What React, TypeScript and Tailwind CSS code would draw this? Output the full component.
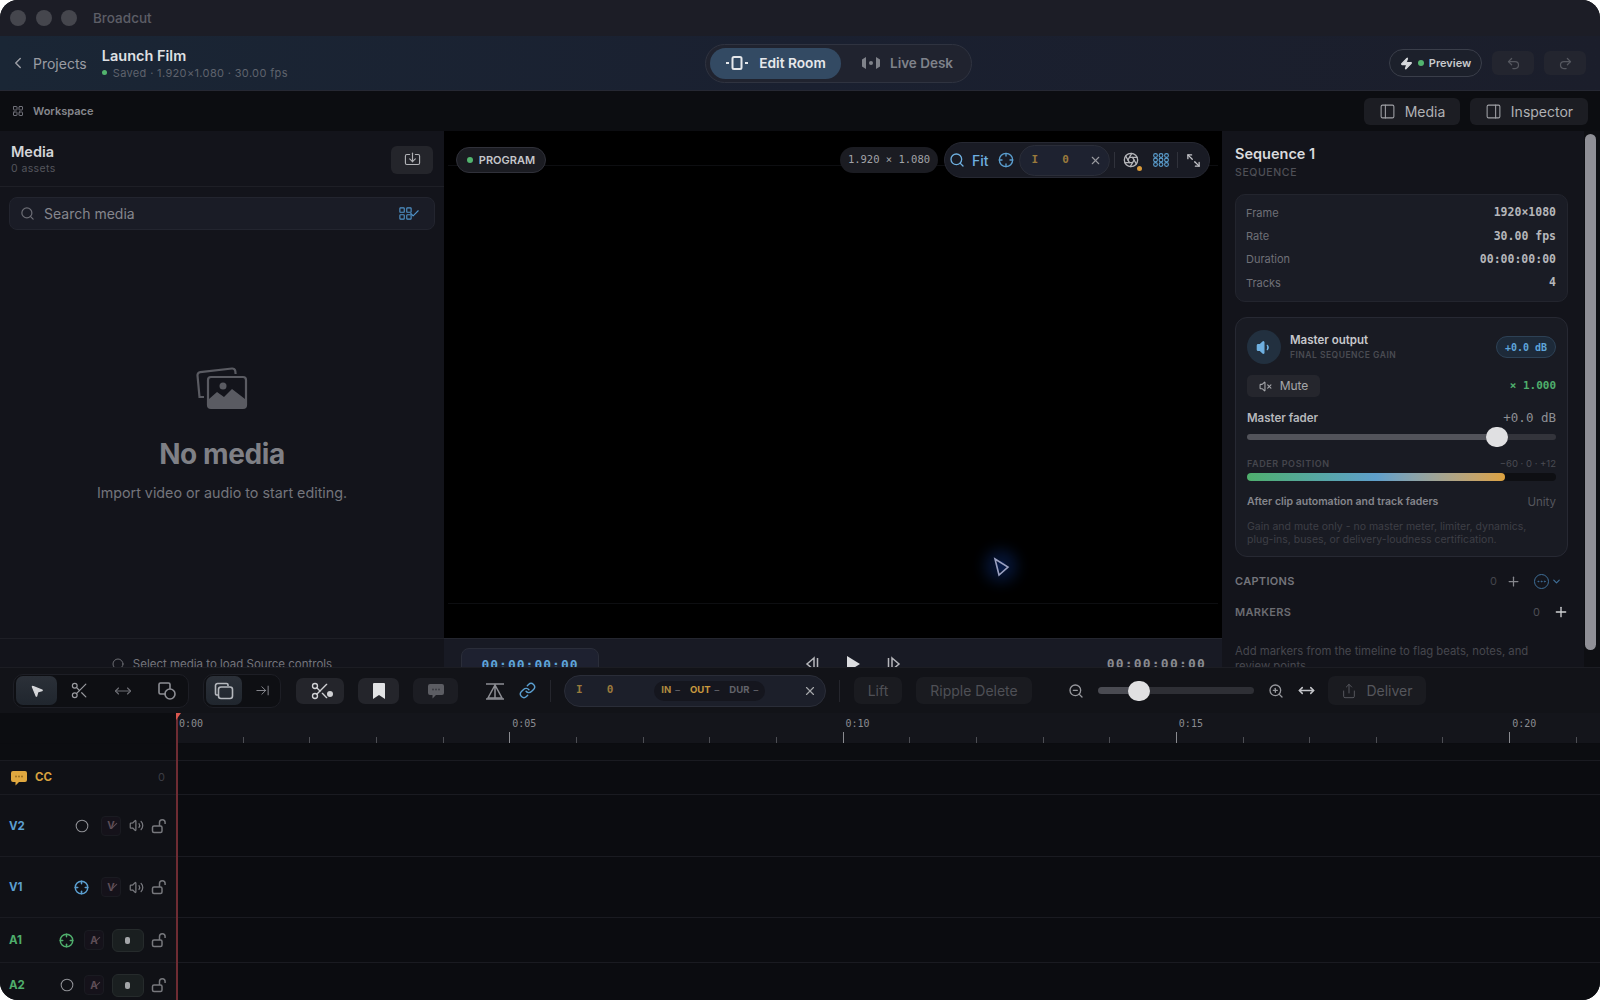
import {
  ArrowRightToLine,
  Check,
  ChevronDown,
  ChevronLeft,
  Aperture,
  Circle,
  Crosshair,
  Ellipsis,
  LayoutGrid,
  Link,
  Maximize2,
  MousePointer2,
  MoveHorizontal,
  PanelLeft,
  PanelRight,
  Plus,
  Redo2,
  Scissors,
  Search,
  Share,
  Undo2,
  Volume1,
  Volume2,
  VolumeX,
  X,
  Zap,
  ZoomIn,
  ZoomOut,
  Import,
} from "lucide-react";

const mono = "[font-family:'DejaVu_Sans_Mono',monospace]";

const sequenceRows = [
  { label: "Frame", value: "1920×1080" },
  { label: "Rate", value: "30.00 fps" },
  { label: "Duration", value: "00:00:00:00" },
  { label: "Tracks", value: "4" },
];

const seconds = Array.from({ length: 22 }, (_, i) => i);

function EditRoomIcon() {
  return (
    <svg width="24" height="16" viewBox="0 0 24 16" fill="none" stroke="currentColor" strokeWidth="2">
      <rect x="7.5" y="2" width="9" height="12" rx="1.5" />
      <path d="M1 8h3M20 8h3" />
    </svg>
  );
}

function LiveDeskIcon() {
  return (
    <svg width="20" height="14" viewBox="0 0 20 14" fill="currentColor">
      <path d="M1 3.5 5 1v12l-4-2.5zM19 3.5 15 1v12l4-2.5z" />
      <circle cx="10" cy="7" r="2" />
    </svg>
  );
}

function DotGrid() {
  return (
    <svg width="16" height="14" viewBox="0 0 16 14" fill="none" stroke="#5b9fd0" strokeWidth="1.1">
      {[2.5, 8, 13.5].map((x) =>
        [2.5, 7, 11.5].map((y) => <circle key={`${x}-${y}`} cx={x} cy={y} r="1.9" />)
      )}
    </svg>
  );
}

function EmptyMediaIcon() {
  return (
    <svg width="52" height="44" viewBox="0 0 52 44" fill="none" stroke="#5a5b62" strokeWidth="2.2">
      <path d="M8 31 3.5 31 1.5 9.5a3 3 0 0 1 2.7-3.3L36 2.5a3 3 0 0 1 3.3 2.7L39.6 8" />
      <rect x="12" y="11" width="38" height="31" rx="3" />
      <circle cx="27" cy="20" r="3.5" fill="#5a5b62" stroke="none" />
      <path d="M13 41V33l8-7 7 5 8-8 13 10v8z" fill="#5a5b62" stroke="none" />
    </svg>
  );
}

function ShapeToolIcon() {
  return (
    <svg width="20" height="20" viewBox="0 0 20 20" fill="none" stroke="#8d8e94" strokeWidth="1.6">
      <path d="M9 13H3.5A1.5 1.5 0 0 1 2 11.5v-8A1.5 1.5 0 0 1 3.5 2h8A1.5 1.5 0 0 1 13 3.5V8" />
      <circle cx="13" cy="13" r="5" />
    </svg>
  );
}

function OverlapIcon() {
  return (
    <svg width="20" height="20" viewBox="0 0 20 20" fill="none" stroke="#b5b8bd" strokeWidth="1.6">
      <path d="M4 14H3a1.5 1.5 0 0 1-1.5-1.5v-8A2 2 0 0 1 3.5 2.5h9A1.5 1.5 0 0 1 14 4v1" />
      <rect x="4.5" y="6" width="14" height="11.5" rx="2.5" />
    </svg>
  );
}

function LiftIcon() {
  return (
    <svg width="20" height="20" viewBox="0 0 20 20" fill="none" stroke="#8d8e94" strokeWidth="1.5">
      <path d="M1 3h18M10 4 3 17h14zM10 4v13" />
      <path d="M1 18h18" />
    </svg>
  );
}

function TrackLockIcon() {
  return (
    <svg width="16" height="16" viewBox="0 0 16 16" fill="none" stroke="#77787d" strokeWidth="1.5">
      <rect x="1.5" y="8" width="9.5" height="6.5" rx="1.5" />
      <path d="M8.5 8V4.5a2.8 2.8 0 0 1 5.6 0V6" />
    </svg>
  );
}

function StepIcon({ flip }: { flip?: boolean }) {
  return (
    <svg
      width="16"
      height="16"
      viewBox="0 0 16 16"
      fill="none"
      stroke="#b6b7bb"
      strokeWidth="1.5"
      className={flip ? "-scale-x-100" : ""}
    >
      <path d="M10 2 3 8l7 6zM13.5 2v12" />
    </svg>
  );
}

function CaptionBubble({ color, dot }: { color: string; dot: string }) {
  return (
    <svg width="18" height="16" viewBox="0 0 18 16">
      <path d="M3 1h12a2 2 0 0 1 2 2v7a2 2 0 0 1-2 2H9l-3.5 3.5V12H3a2 2 0 0 1-2-2V3a2 2 0 0 1 2-2z" fill={color} />
      <circle cx="6" cy="6.5" r="1" fill={dot} />
      <circle cx="9" cy="6.5" r="1" fill={dot} />
      <circle cx="12" cy="6.5" r="1" fill={dot} />
    </svg>
  );
}

function Ruler() {
  return (
    <div className="flex h-[31px] border-b border-[#0b0c10] bg-[#14151b] overflow-hidden">
      <div className="w-[176px] shrink-0 bg-[#0c0d11]" />
      {seconds.map((s) => (
        <div key={s} className="flex w-[66.67px] shrink-0 flex-col justify-between">
          <span className={`h-[18px] pl-[3px] pt-[4px] text-[10px] leading-[14px] text-[#8b8c91] ${mono}`}>
            {s % 5 === 0 ? `0:${String(s).padStart(2, "0")}` : ""}
          </span>
          {s % 5 === 0 ? (
            <div className={`w-px h-[11px] ${s === 0 ? "bg-transparent" : "bg-[#8a8b90]"}`} />
          ) : (
            <div className="w-px h-[6px] bg-[#4d4e54]" />
          )}
        </div>
      ))}
    </div>
  );
}

function TrackRow({
  name,
  color,
  height,
  target,
  letter,
  audio,
}: {
  name: string;
  color: string;
  height: string;
  target: "off" | "blue" | "green";
  letter: string;
  audio?: boolean;
}) {
  return (
    <div className={`flex ${height} border-t border-[#1a1b21]`}>
      <div className="flex w-[176px] shrink-0 items-center bg-[#101116] pl-[9px] pr-[9px]">
        <span className={`mt-[2px] text-[11.5px] font-bold ${color}`}>{name}</span>
        <div className="ml-auto flex items-center gap-[7.5px]">
          <span className={audio ? "mr-[3px] flex" : "mr-[5px] flex"}>
            {target === "off" && <Circle size={14} strokeWidth={1.8} className="text-[#8f9095]" />}
            {target === "blue" && <Crosshair size={15} strokeWidth={2.4} className="text-[#5b9fd0]" />}
            {target === "green" && <Crosshair size={15} strokeWidth={2.4} className="text-[#4fae6c]" />}
          </span>
          <span className="relative flex h-[20px] w-[20px] items-center justify-center overflow-hidden rounded-[4px] border border-[#1a1b21] bg-[#15121a] text-[10px] font-bold text-[#5e4d56]">
            {letter}
            <span className="absolute left-[9px] top-[8px] h-px w-[7px] -rotate-45 bg-[#5e4d56]" />
          </span>
          {audio ? (
            <span className="flex h-[23px] w-[32px] items-center justify-center rounded-[6px] border border-[#262b2c] bg-[#1a1f20]">
              <span className="h-[7px] w-[5px] rounded-[2px] bg-[#a3a5a8]" />
            </span>
          ) : (
            <Volume2 size={15} className="text-[#77787d]" />
          )}
          <TrackLockIcon />
        </div>
      </div>
      <div className="flex-1 bg-[#0b0c10]" />
    </div>
  );
}

export default function App() {
  return (
    <div className="h-screen w-full overflow-hidden bg-white [font-family:Inter,sans-serif]">
      <div className="relative flex h-[1000px] flex-col overflow-hidden rounded-[18px] bg-[#0b0c10]">
        {/* title bar */}
        <div className="flex h-[36px] shrink-0 items-center bg-[#1c1d26] pl-[10px]">
          <span className="h-[16px] w-[16px] rounded-full bg-[#45464d]" />
          <span className="ml-[9.5px] h-[16px] w-[16px] rounded-full bg-[#45464d]" />
          <span className="ml-[9.5px] h-[16px] w-[16px] rounded-full bg-[#45464d]" />
          <span className="ml-[16px] text-[13.5px] font-medium text-[#5d5e66]">Broadcut</span>
        </div>

        {/* header */}
        <div className="flex h-[55px] shrink-0 items-center border-b border-[#262833] bg-gradient-to-r from-[#1a2635] via-[#1a2030] to-[#1b1e2b]">
          <div className="flex w-[705px] shrink-0 items-center pl-[9px]">
            <ChevronLeft size={18} className="text-[#9a9ca3]" />
            <span className="ml-[6px] text-[14px] text-[#9a9ca3]">Projects</span>
            <div className="ml-[15px] flex flex-col">
              <span className="text-[14.5px] leading-[18px] font-semibold text-[#dfe0e3]">Launch Film</span>
              <span className="mt-[1px] flex items-center gap-[6px] text-[11px] leading-[14px] tracking-[0.35px] text-[#5f636d]">
                <span className="h-[5px] w-[5px] rounded-full bg-[#52b46e]" />
                Saved · 1.920×1.080 · 30.00 fps
              </span>
            </div>
          </div>
          <div className="flex h-[39px] w-[267px] shrink-0 items-center gap-[5px] rounded-full border border-[#2f3340] bg-[#20232f] px-[4px]">
            <div className="flex h-[31px] w-[131px] items-center justify-center gap-[10px] rounded-full bg-[#334a63] text-[#e6e8eb]">
              <EditRoomIcon />
              <span className="text-[13.7px] font-semibold">Edit Room</span>
            </div>
            <div className="flex items-center gap-[9px] pl-[15px] text-[#7f828a]">
              <LiveDeskIcon />
              <span className="text-[13.5px] font-semibold">Live Desk</span>
            </div>
          </div>
          <div className="flex flex-1 items-center justify-end gap-[10px] pr-[14px]">
            <div className="flex h-[28px] w-[93px] items-center justify-center gap-[5px] rounded-full border border-[#3a3e4a] bg-[#1c202b]">
              <Zap size={13} className="fill-[#d8dadd] text-[#d8dadd]" />
              <span className="h-[6px] w-[6px] rounded-full bg-[#52b46e]" />
              <span className="text-[11px] font-semibold text-[#c8cacd]">Preview</span>
            </div>
            <div className="flex h-[24px] w-[42px] items-center justify-center rounded-[6px] bg-[#23252f]">
              <Undo2 size={15} className="text-[#55575f]" />
            </div>
            <div className="flex h-[24px] w-[42px] items-center justify-center rounded-[6px] bg-[#23252f]">
              <Redo2 size={15} className="text-[#55575f]" />
            </div>
          </div>
        </div>

        {/* workspace bar */}
        <div className="flex h-[40px] shrink-0 items-center justify-between bg-[#0c0d11] pl-[12px] pr-[12px]">
          <div className="flex items-center gap-[9px]">
            <LayoutGrid size={12} className="text-[#70717a]" />
            <span className="text-[11px] font-semibold text-[#86878d]">Workspace</span>
          </div>
          <div className="flex items-center gap-[10px]">
            <div className="flex h-[27px] w-[96px] items-center justify-center gap-[9px] rounded-[6px] bg-[#1c1d23]">
              <PanelLeft size={17} strokeWidth={1.5} className="text-[#a0a1a6]" />
              <span className="text-[14px] text-[#b0b1b5]">Media</span>
            </div>
            <div className="flex h-[27px] w-[118px] items-center justify-center gap-[9px] rounded-[6px] bg-[#1c1d23]">
              <PanelRight size={17} strokeWidth={1.5} className="text-[#a0a1a6]" />
              <span className="text-[14px] text-[#b0b1b5]">Inspector</span>
            </div>
          </div>
        </div>

        {/* main panels */}
        <div className="flex h-[536px] shrink-0 overflow-hidden">
          {/* media */}
          <div className="flex w-[444px] shrink-0 flex-col bg-[#13141b]">
            <div className="flex h-[56px] shrink-0 items-center justify-between border-b border-[#1e1f26] pl-[11px] pr-[11px] pt-[2px]">
              <div className="flex flex-col">
                <span className="text-[14.5px] leading-[18px] font-semibold text-[#d4d5d8]">Media</span>
                <span className="text-[10.5px] leading-[15px] tracking-[0.4px] text-[#55565d]">0 assets</span>
              </div>
              <div className="flex h-[28px] w-[42px] items-center justify-center rounded-[6px] bg-[#24252b]">
                <Import size={17} strokeWidth={1.6} className="text-[#b2b3b7]" />
              </div>
            </div>
            <div className="mx-[9px] mt-[10px] flex h-[33px] shrink-0 items-center rounded-[8px] border border-[#23252f] bg-[#1a1c26] pl-[10px] pr-[14px]">
              <Search size={15} className="text-[#6b6c74]" />
              <span className="ml-[9px] text-[14px] text-[#85868d]">Search media</span>
              <span className="ml-auto flex items-center text-[#4f93c9]">
                <LayoutGrid size={15} strokeWidth={1.8} />
                <Check size={11} strokeWidth={2.4} className="-ml-[4px]" />
              </span>
            </div>
            <div className="flex h-[408px] shrink-0 flex-col items-center pt-[136px]">
              <EmptyMediaIcon />
              <span className="mt-[27px] text-[28px] leading-[34px] font-bold tracking-[-0.4px] text-[#7f8086]">No media</span>
              <span className="mt-[12px] text-[14.3px] leading-[20px] text-[#74757c]">Import video or audio to start editing.</span>
            </div>
            <div className="flex h-[50px] shrink-0 items-start justify-center gap-[9px] border-t border-[#1e1f26] pt-[16px]">
              <Circle size={12} className="mt-[3px] text-[#6b6c72]" />
              <span className="text-[11.5px] leading-[18px] text-[#74757b]">Select media to load Source controls</span>
            </div>
          </div>

          {/* program viewer */}
          <div className="flex w-[778px] shrink-0 flex-col">
            <div className="relative h-[507px] shrink-0 bg-black">
              {/* frame outline */}
              <div className="absolute inset-x-[4px] top-[34px] bottom-[34px] border-y border-[#0d0e11]" />
              <div className="relative flex h-[54px] items-center justify-between pl-[12px] pr-[12px] pt-[4px]">
                <div className="flex h-[26px] w-[90px] items-center justify-center gap-[6px] rounded-full border border-[#30313a] bg-[#1b1c22]">
                  <span className="h-[6px] w-[6px] rounded-full bg-[#52b46e]" />
                  <span className="text-[11px] font-semibold text-[#c5c6ca]">PROGRAM</span>
                </div>
                <div className="flex items-center gap-[6px]">
                  <div className={`flex h-[26px] w-[98px] items-center justify-center rounded-full bg-[#1b1c22] text-[10.5px] text-[#a2a3a8] ${mono}`}>
                    1.920 × 1.080
                  </div>
                  <div className="flex h-[36px] w-[266px] items-center rounded-full border border-[#262832] bg-[#191b24] pl-[4px]">
                    <Search size={16} className="text-[#6fb0e0]" />
                    <span className="ml-[7px] text-[14px] font-medium text-[#6fb0e0]">Fit</span>
                    <Crosshair size={16} className="ml-[9px] text-[#5b9fd0]" />
                    <div className="ml-[5px] flex h-[31px] w-[91px] items-center rounded-full border border-[#2a2d38] bg-[#1e2230] pl-[12px] pr-[7px]">
                      <span className={`text-[11px] font-bold text-[#9a7a3c] ${mono}`}>I</span>
                      <span className={`ml-[24px] text-[11px] font-bold text-[#9a7a3c] ${mono}`}>0</span>
                      <X size={13} className="ml-auto text-[#9a9ba0]" />
                    </div>
                    <div className="ml-[4px] h-[16px] w-px bg-[#30323b]" />
                    <span className="relative ml-[8px] flex">
                      <Aperture size={16} className="text-[#b4b5b9]" />
                      <span className="absolute -right-[3px] -bottom-[3px] h-[5px] w-[5px] rounded-full bg-[#d99a3a]" />
                    </span>
                    <span className="ml-[14px] flex">
                      <DotGrid />
                    </span>
                    <div className="ml-[8px] h-[16px] w-px bg-[#30323b]" />
                    <Maximize2 size={15} className="ml-[8px] -scale-x-100 text-[#c5c6ca]" />
                  </div>
                </div>
              </div>
              {/* pointer */}
              <div className="absolute left-[552px] top-[430px] h-[10px] w-[10px] rounded-full bg-[#071a45] shadow-[0_0_14px_11px_#061433]" />
              <svg width="20" height="20" viewBox="0 0 20 20" fill="none" stroke="#9aa0c0" strokeWidth="1.6" className="absolute left-[547px] top-[426px]">
                <path d="M4 2 17 10 8 18z" />
              </svg>
            </div>
            <div className="flex h-[50px] shrink-0 items-start border-t border-[#24262f] bg-[#181a24] pl-[17px] pr-[16px] pt-[9px]">
              <div className="flex h-[40px] w-[138px] justify-center rounded-t-[8px] border border-[#2a2d39] bg-[#1e2130] pt-[6px]">
                <span className={`text-[13px] font-bold tracking-[1px] text-[#5ea5da] ${mono}`}>00:00:00:00</span>
              </div>
              <div className="ml-[205px] flex items-center gap-[25px] pt-[7px]">
                <StepIcon />
                <svg width="16" height="18" viewBox="0 0 16 18" fill="#dcdde0">
                  <path d="M2 1 15 9 2 17z" />
                </svg>
                <StepIcon flip />
              </div>
              <span className={`ml-auto pt-[6px] text-[13px] font-bold tracking-[1.2px] text-[#8a8b90] ${mono}`}>00:00:00:00</span>
            </div>
          </div>

          {/* inspector */}
          <div className="flex w-[378px] shrink-0 bg-[#13141b]">
            <div className="w-[362px] shrink-0 pl-[13px] pr-[16px]">
              <div className="pt-[14px] text-[14.5px] leading-[18px] font-semibold text-[#d9dadd]">Sequence 1</div>
              <div className="mt-[2px] text-[10.5px] leading-[16px] font-medium tracking-[0.6px] text-[#4f5057]">SEQUENCE</div>
              <div className="mt-[13px] flex h-[108px] flex-col justify-center gap-[7.4px] rounded-[10px] border border-[#23252e] bg-[#1a1c25] pl-[10px] pr-[11px]">
                {sequenceRows.map((row) => (
                  <div key={row.label} className="flex h-[16px] items-center justify-between">
                    <span className="text-[11px] text-[#6f7077]">{row.label}</span>
                    <span className={`text-[11.5px] font-bold text-[#b5b6ba] ${mono}`}>{row.value}</span>
                  </div>
                ))}
              </div>
              <div className="mt-[15px] h-[240px] rounded-[12px] border border-[#272933] bg-[#191b23] pl-[11px] pr-[11px] pt-[12px]">
                <div className="flex items-center">
                  <div className="flex h-[34px] w-[34px] items-center justify-center rounded-full bg-[#22303f]">
                    <Volume1 size={17} className="fill-[#6fb0e0] text-[#6fb0e0]" />
                  </div>
                  <div className="ml-[9px] flex flex-col">
                    <span className="text-[11.5px] leading-[15px] font-semibold text-[#c6c7cb]">Master output</span>
                    <span className="mt-[1px] text-[8.5px] leading-[12px] font-semibold tracking-[0.5px] text-[#4a4b52]">FINAL SEQUENCE GAIN</span>
                  </div>
                  <span className={`ml-auto flex h-[22px] w-[60px] items-center justify-center rounded-full border border-[#2d4155] bg-[#1d2a39] text-[10px] font-bold text-[#5ea5da] ${mono}`}>
                    +0.0 dB
                  </span>
                </div>
                <div className="mt-[11px] flex items-center justify-between">
                  <div className="flex h-[22px] w-[73px] items-center justify-center gap-[8px] rounded-[5px] bg-[#25262d]">
                    <VolumeX size={13} className="text-[#a5a6aa]" />
                    <span className="text-[12px] text-[#a5a6aa]">Mute</span>
                  </div>
                  <span className={`text-[11px] font-bold text-[#4fae6c] ${mono}`}>× 1.000</span>
                </div>
                <div className="mt-[13px] flex items-center justify-between">
                  <span className="text-[11.5px] font-semibold leading-[16px] text-[#b6b7bb]">Master fader</span>
                  <span className={`text-[12.5px] leading-[16px] text-[#8e8f94] ${mono}`}>+0.0 dB</span>
                </div>
                <div className="mt-0 flex h-[22px] items-center">
                  <div className="h-[6px] w-[240px] rounded-l-full bg-[#52535a]" />
                  <div className="z-10 -ml-[1px] h-[20px] w-[22px] shrink-0 rounded-full bg-[#e0e0e2]" />
                  <div className="-ml-[1px] h-[6px] flex-1 rounded-r-full bg-[#33343b]" />
                </div>
                <div className="mt-[10px] flex items-center justify-between">
                  <span className="text-[9px] leading-[12px] font-semibold tracking-[0.6px] text-[#45464d]">FADER POSITION</span>
                  <span className="text-[9.5px] leading-[12px] text-[#4a4b52]">−60 · 0 · +12</span>
                </div>
                <div className="mt-[3px] h-[8px] rounded-full bg-[#0e0f13]">
                  <div className="h-[8px] w-[258px] rounded-full bg-gradient-to-r from-[#4fae6c] via-[#5f9fcb] to-[#dda23e]" />
                </div>
                <div className="mt-[14px] flex items-center justify-between">
                  <span className="text-[10.5px] leading-[14px] font-semibold text-[#85868c]">After clip automation and track faders</span>
                  <span className="text-[11.5px] leading-[14px] text-[#55565d]">Unity</span>
                </div>
                <p className="mt-[12px] text-[10.5px] leading-[12.5px] text-[#3e3f46]">
                  Gain and mute only - no master meter, limiter, dynamics,
                  <br />
                  plug-ins, buses, or delivery-loudness certification.
                </p>
              </div>
              <div className="mt-[15px] mr-[6px] flex h-[18px] items-center">
                <span className="text-[11px] font-semibold tracking-[0.3px] text-[#74757b]">CAPTIONS</span>
                <span className="ml-auto text-[11px] text-[#44454c]">0</span>
                <Plus size={15} className="ml-[9px] text-[#85868c]" />
                <span className="ml-[13px] flex items-center text-[#3f6f98]">
                  <Ellipsis size={15} className="rounded-full border border-[#3f6f98] p-[1px]" />
                  <ChevronDown size={11} strokeWidth={2.6} className="ml-[2px]" />
                </span>
              </div>
              <div className="mt-[13px] flex h-[18px] items-center">
                <span className="text-[11px] font-semibold tracking-[0.3px] text-[#6b6c72]">MARKERS</span>
                <span className="ml-auto text-[11px] text-[#4c4d54]">0</span>
                <Plus size={16} className="ml-[13px] mr-[-1px] text-[#d0d1d4]" />
              </div>
              <p className="mt-[23px] w-[310px] text-[11.3px] leading-[15px] text-[#46474e]">
                Add markers from the timeline to flag beats, notes, and review points
              </p>
            </div>
            <div className="flex-1 bg-[#0e0f13] pt-[3px] pl-[1px]">
              <div className="h-[516px] w-[11px] rounded-full bg-[#8f8f96]" />
            </div>
          </div>
        </div>

        {/* toolbar */}
        <div className="flex h-[46px] shrink-0 items-center border-t border-[#1c1d23] bg-[#121318] pl-[13px]">
          <div className="flex h-[34px] w-[176px] items-center rounded-[10px] border border-[#1d1e25] bg-[#0e0f13] pl-[2px]">
            <div className="flex h-[29px] w-[41px] items-center justify-center rounded-[7px] bg-gradient-to-b from-[#2b3038] to-[#20262e]">
              <MousePointer2 size={14} className="fill-[#d5d6d9] text-[#d5d6d9]" />
            </div>
            <Scissors size={19} strokeWidth={1.5} className="ml-[13px] text-[#9a9ba0]" />
            <MoveHorizontal size={18} strokeWidth={1.5} className="ml-[25px] text-[#6f7076]" />
            <span className="ml-[25px] flex">
              <ShapeToolIcon />
            </span>
          </div>
          <div className="ml-[14px] flex h-[34px] w-[78px] items-center rounded-[10px] border border-[#1d1e25] bg-[#0e0f13] pl-[2px]">
            <div className="flex h-[29px] w-[36px] items-center justify-center rounded-[7px] bg-gradient-to-b from-[#2b3038] to-[#20262e]">
              <OverlapIcon />
            </div>
            <ArrowRightToLine size={15} strokeWidth={1.5} className="ml-[13px] text-[#8d8e94]" />
          </div>
          <div className="relative ml-[15px] flex h-[26px] w-[48px] items-center justify-center rounded-[7px] bg-[#24252b]">
            <Scissors size={20} strokeWidth={1.6} className="text-[#d0d1d4]" />
            <span className="absolute right-[11px] top-[13px] h-[6px] w-[6px] rounded-full bg-[#d0d1d4]" />
          </div>
          <div className="ml-[14px] flex h-[26px] w-[41px] items-center justify-center rounded-[7px] bg-[#24252b]">
            <svg width="12" height="16" viewBox="0 0 12 16" fill="#e2e3e5">
              <path d="M0 1a1 1 0 0 1 1-1h10a1 1 0 0 1 1 1v15l-6-4-6 4z" />
            </svg>
          </div>
          <div className="ml-[14px] flex h-[26px] w-[45px] items-center justify-center rounded-[7px] bg-[#1c1d23]">
            <CaptionBubble color="#5c5d63" dot="#3b3c42" />
          </div>
          <span className="ml-[27px] flex">
            <LiftIcon />
          </span>
          <Link size={17} className="ml-[14px] text-[#5b9fd0]" />
          <div className="ml-[14px] h-[22px] w-px bg-[#25262d]" />
          <div className="ml-[13px] flex h-[32px] w-[262px] items-center rounded-full border border-[#2a2d38] bg-[#1c1f2a] pl-[11px] pr-[8px]">
            <span className={`text-[11px] font-bold text-[#9a7a3c] ${mono}`}>I</span>
            <span className={`ml-[24px] text-[11px] font-bold text-[#9a7a3c] ${mono}`}>0</span>
            <div className="ml-[41px] flex h-[20px] w-[111px] items-center justify-center gap-[4px] rounded-full bg-[#15161e] text-[9.5px] font-bold">
              <span className="text-[#b08a3e]">IN</span>
              <span className="font-normal text-[#6a6b72]">–</span>
              <span className="ml-[6px] text-[#c8993f]">OUT</span>
              <span className="font-normal text-[#6a6b72]">–</span>
              <span className="ml-[6px] text-[#62636a]">DUR</span>
              <span className="font-normal text-[#6a6b72]">–</span>
            </div>
            <X size={14} className="ml-auto text-[#a5a6aa]" />
          </div>
          <div className="ml-[13px] h-[22px] w-px bg-[#25262d]" />
          <div className="ml-[14px] flex h-[27px] w-[48px] items-center justify-center rounded-[7px] bg-[#1a1b20] text-[14px] text-[#4f5056]">Lift</div>
          <div className="ml-[14px] flex h-[27px] w-[116px] items-center justify-center rounded-[7px] bg-[#1a1b20] text-[14px] text-[#4f5056]">Ripple Delete</div>
          <ZoomOut size={16} className="ml-[36px] text-[#96979c]" />
          <div className="ml-[14px] flex h-[22px] w-[156px] items-center">
            <div className="h-[7px] w-[31px] rounded-l-full bg-[#4a4b52]" />
            <div className="z-10 -ml-[1px] h-[20px] w-[22px] shrink-0 rounded-full bg-[#e0e0e2]" />
            <div className="-ml-[1px] h-[7px] flex-1 rounded-r-full bg-[#2e2f35]" />
          </div>
          <ZoomIn size={16} className="ml-[14px] text-[#96979c]" />
          <MoveHorizontal size={17} strokeWidth={2.2} className="ml-[14px] text-[#c4c5c9]" />
          <div className="ml-[13px] flex h-[29px] w-[98px] items-center justify-center gap-[9px] rounded-[7px] bg-[#1a1b20]">
            <Share size={16} strokeWidth={1.5} className="text-[#55565c]" />
            <span className="text-[14px] text-[#55565c]">Deliver</span>
          </div>
        </div>

        {/* timeline */}
        <div className="relative flex-1 overflow-hidden">
          <Ruler />
          <div className="h-[16px] bg-[#0c0d11]" />
          <div className="flex h-[34px] border-t border-[#1a1b21]">
            <div className="flex w-[176px] shrink-0 items-center bg-[#101116] pl-[10px] pr-[11px]">
              <CaptionBubble color="#e0a83f" dot="#9a6f22" />
              <span className="ml-[7px] text-[11.5px] font-bold text-[#d8a23f]">CC</span>
              <span className="ml-auto text-[11px] text-[#3c3d44]">0</span>
            </div>
            <div className="flex-1 bg-[#0b0c10]" />
          </div>
          <TrackRow name="V2" color="text-[#5b9fd0]" height="h-[62px]" target="off" letter="V" />
          <TrackRow name="V1" color="text-[#5b9fd0]" height="h-[61px]" target="blue" letter="V" />
          <TrackRow name="A1" color="text-[#4fae6c]" height="h-[45px]" target="green" letter="A" audio />
          <TrackRow name="A2" color="text-[#4fae6c]" height="h-[45px]" target="off" letter="A" audio />
          {/* playhead */}
          <div className="absolute left-[176px] top-0 bottom-0 w-[2px] bg-[#6e2c33]" />
          <div className="absolute left-[176px] top-0 h-[7px] w-[5px] bg-[#d9574f] [clip-path:polygon(0_0,100%_0,0_100%)]" />
        </div>
      </div>
    </div>
  );
}
